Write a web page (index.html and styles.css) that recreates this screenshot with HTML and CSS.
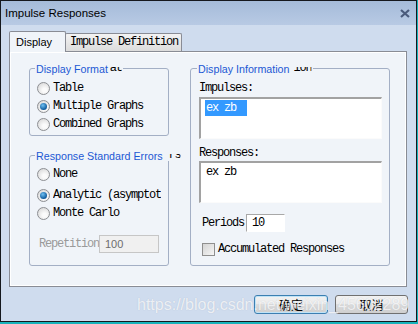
FILE: index.html
```html
<!DOCTYPE html>
<html lang="en">
<head>
    <meta charset="UTF-8">
    <meta name="viewport" content="width=device-width, initial-scale=1.0">
    <title>Impulse Responses</title>
    <link rel="stylesheet" href="styles.css">
</head>
<body>
    <div class="window">
        <div class="titlebar">
            <span class="title">Impulse Responses</span>
            <svg class="close" width="10" height="9" viewBox="0 0 10 9">
                <path d="M1 1 L9 8 M9 1 L1 8" stroke="#4a5b7c" stroke-width="2.2" fill="none"/>
            </svg>
        </div>
        <div class="client">
            <div class="tabs">
                <div class="tab active">Display</div>
                <div class="tab mono">Impulse Definition</div>
            </div>
            <div class="panel">
                <div class="col-left">
                    <fieldset class="group group-format">
                        <legend><span class="legend-text">Display Format</span><span class="tail mono tail-format">at</span></legend>
                        <div class="radio-row"><span class="radio"></span><span class="mono">Table</span></div>
                        <div class="radio-row"><span class="radio on"></span><span class="mono">Multiple Graphs</span></div>
                        <div class="radio-row"><span class="radio"></span><span class="mono">Combined Graphs</span></div>
                    </fieldset>
                    <fieldset class="group group-errors">
                        <legend><span class="legend-text">Response Standard Errors</span><span class="tail mono tail-errors">rs</span></legend>
                        <div class="radio-row"><span class="radio"></span><span class="mono">None</span></div>
                        <div class="radio-row spaced"><span class="radio on"></span><span class="mono clipped">Analytic (asymptotic)</span></div>
                        <div class="radio-row"><span class="radio"></span><span class="mono">Monte Carlo</span></div>
                        <div class="rep-row">
                            <span class="mono rep-label">Repetition</span>
                            <div class="rep-input">100</div>
                        </div>
                    </fieldset>
                </div>
                <fieldset class="group group-info">
                    <legend><span class="legend-text">Display Information</span><span class="tail mono tail-info">ion</span></legend>
                    <div class="field-label mono">Impulses:</div>
                    <div class="listbox">
                        <div class="item selected mono">ex zb</div>
                    </div>
                    <div class="field-label mono second">Responses:</div>
                    <div class="listbox">
                        <div class="item mono">ex zb</div>
                    </div>
                    <div class="periods-row">
                        <span class="mono">Periods</span>
                        <div class="periods-input mono">10</div>
                    </div>
                    <div class="check-row">
                        <span class="checkbox"></span>
                        <span class="mono">Accumulated Responses</span>
                    </div>
                </fieldset>
            </div>
            <div class="buttons">
                <button class="btn default">确定</button>
                <button class="btn">取消</button>
            </div>
        </div>
        <div class="watermark">https://blog.csdn.net/weixin_45602289</div>
    </div>
</body>
</html>
```

FILE: styles.css
```css
* {
    box-sizing: border-box;
}
body {
    margin: 0;
    width: 418px;
    height: 324px;
    overflow: hidden;
    background: #17b3bb;
    font-family: "Liberation Sans", Arial, sans-serif;
}
.window {
    position: relative;
    width: 417px;
    height: 322px;
    border: 1px solid #15181d;
    background: #cfdcee;
}
.titlebar {
    height: 24px;
    display: flex;
    align-items: center;
    justify-content: space-between;
    padding: 0 6px 0 4px;
    background: linear-gradient(#a5bbd9, #b8cae4);
}
.title {
    font-size: 11.5px;
    color: #000;
}
.client {
    padding: 6px 8px 0 8px;
}
.mono {
    font-family: "Liberation Mono", "Courier New", monospace;
    font-size: 12px;
    letter-spacing: -1.2px;
    color: #000;
}

/* tabs */
.tabs {
    display: flex;
    align-items: flex-end;
    height: 20px;
}
.tab {
    border: 1px solid #898c95;
    border-bottom: none;
    white-space: nowrap;
}
.tab.active {
    position: relative;
    z-index: 1;
    width: 57px;
    height: 21px;
    margin-bottom: -1px;
    padding-left: 6px;
    background: #f0f4f9;
    font-size: 11px;
    line-height: 20px;
    border-radius: 2px 2px 0 0;
}
.tab.mono {
    width: 117px;
    height: 18px;
    margin-left: -1px;
    padding-left: 4px;
    line-height: 17px;
    background: linear-gradient(#f3f3f3, #dcdcdc);
    border-radius: 2px 2px 0 0;
}

/* panel */
.panel {
    width: 398px;
    height: 236px;
    border: 1px solid #898c95;
    box-shadow: inset 1px 1px #fff, inset -1px -1px #fff;
    background: #f0f4f9;
    display: flex;
    gap: 21px;
    padding: 10px 0 0 19px;
}
.col-left {
    width: 140px;
    display: flex;
    flex-direction: column;
}
.group {
    margin: 0;
    min-width: 0;
    border: 1px solid #a3afc5;
    border-radius: 3px;
}
legend {
    margin-left: -2px;
    padding: 0 1px;
    height: 12px;
    line-height: 12px;
    white-space: nowrap;
}
.legend-text {
    font-size: 10.7px;
    color: #1c58d4;
}
.tail {
    display: inline-block;
    height: 12px;
    line-height: 12px;
    vertical-align: top;
    clip-path: inset(5px 0 0 0);
}
.tail-format { margin-left: 2px; }
.tail-errors { margin-left: 6px; }
.tail-info { margin-left: 4px; }

.group-format {
    width: 140px;
    height: 74px;
    padding: 5px 6px 0 7px;
}
.group-errors {
    width: 140px;
    height: 117px;
    margin-top: 13px;
    padding: 4px 6px 0 7px;
}
.group-info {
    width: 200px;
    height: 204px;
    padding: 8px 7px 0 8px;
}

/* radios */
.radio-row {
    display: flex;
    align-items: center;
    gap: 3px;
    height: 18px;
    white-space: nowrap;
}
.radio-row.spaced {
    margin-top: 3px;
}
.radio {
    flex: none;
    width: 13px;
    height: 13px;
    border-radius: 50%;
    border: 1px solid #8d8f93;
    background: radial-gradient(circle at 60% 65%, #fbfbfb 20%, #d6d6d6 90%);
    display: flex;
    align-items: center;
    justify-content: center;
}
.radio.on::after {
    content: "";
    width: 7px;
    height: 7px;
    border-radius: 50%;
    background: radial-gradient(circle at 40% 35%, #6fc0f2, #0e5a9c 70%, #0b3e70);
}
.clipped {
    width: 108px;
    overflow: hidden;
}
.rep-row {
    display: flex;
    align-items: center;
    height: 18px;
    margin-top: 13px;
    margin-left: 2px;
}
.rep-label {
    width: 60px;
    color: #9a9a9a;
}
.rep-input {
    width: 60px;
    height: 18px;
    border: 1px solid #c6c6c6;
    background: #f0f0f0;
    padding-left: 5px;
    font-size: 11px;
    line-height: 16px;
    color: #6d6d6d;
}

/* display information */
.field-label {
    height: 12px;
    line-height: 12px;
}
.field-label.second {
    margin-top: 8px;
}
.listbox {
    width: 183px;
    height: 42px;
    margin-top: 3px;
    padding: 1px 0 0 4px;
    background: #fff;
    border-style: solid;
    border-width: 2px 1px 1px 2px;
    border-color: #a2a2a2 #fbfbfb #fbfbfb #a2a2a2;
}
.field-label.second + .listbox {
    margin-top: 2px;
}
.item {
    width: 42px;
    height: 16px;
    line-height: 16px;
    padding-left: 1px;
}
.item.selected {
    background: #3399ff;
    color: #fff;
}
.periods-row {
    display: flex;
    align-items: center;
    height: 18px;
    margin-top: 11px;
    margin-left: 3px;
    gap: 2px;
}
.periods-input {
    width: 39px;
    height: 18px;
    padding-left: 5px;
    line-height: 17px;
    background: #fff;
    border-style: solid;
    border-width: 1px;
    border-color: #a8a8a8 #ffffff #ffffff #a8a8a8;
}
.check-row {
    display: flex;
    align-items: center;
    gap: 3px;
    height: 14px;
    margin-top: 10px;
    margin-left: 3px;
}
.checkbox {
    width: 13px;
    height: 13px;
    border: 1px solid #8f8f8f;
    background: linear-gradient(135deg, #d4d4d4, #f6f6f6);
}

/* buttons */
.buttons {
    display: flex;
    justify-content: flex-end;
    gap: 7px;
    margin-top: 8px;
}
.btn {
    width: 73px;
    height: 19px;
    padding: 0;
    border: 1px solid #707070;
    border-radius: 3px;
    background: linear-gradient(#f2f2f2 0%, #ebebeb 45%, #dddddd 50%, #cfcfcf 100%);
    font-family: "Noto Sans CJK SC", sans-serif;
    font-size: 12px;
    line-height: 17px;
    color: #000;
}
.btn.default {
    width: 74px;
    border-color: #3c7fb1;
    box-shadow: inset 0 0 0 1px #bfe3f7;
}

.watermark {
    position: absolute;
    left: 136px;
    top: 296px;
    font-size: 16px;
    line-height: 16px;
    white-space: nowrap;
    color: rgba(255, 255, 255, 0.75);
    text-shadow: 0 0 1px rgba(110, 120, 140, 0.3);
}
```
